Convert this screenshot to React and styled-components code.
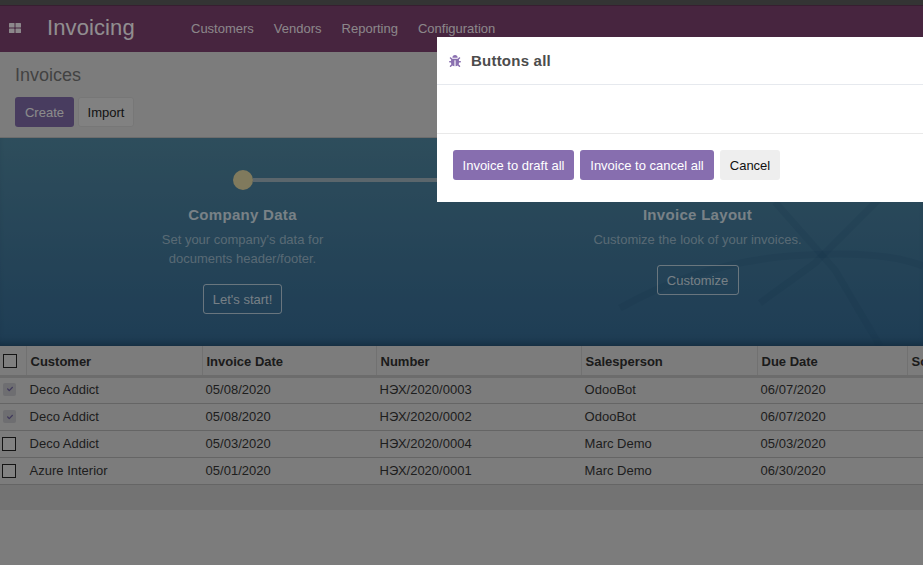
import styled, { createGlobalStyle } from "styled-components";
import { FaBug, FaCheck } from "react-icons/fa";

const invoices = [
  { customer: "Deco Addict", date: "05/08/2020", number: "НЭХ/2020/0003", person: "OdooBot", due: "06/07/2020", checked: true },
  { customer: "Deco Addict", date: "05/08/2020", number: "НЭХ/2020/0002", person: "OdooBot", due: "06/07/2020", checked: true },
  { customer: "Deco Addict", date: "05/03/2020", number: "НЭХ/2020/0004", person: "Marc Demo", due: "05/03/2020" },
  { customer: "Azure Interior", date: "05/01/2020", number: "НЭХ/2020/0001", person: "Marc Demo", due: "06/30/2020" },
];

export default function App() {
  return (
    <Page>
      <GlobalStyle />
      <TopStrip />
      <Navbar>
        <AppsIcon viewBox="0 0 12 10">
          <rect x="0" y="0" width="5.5" height="4.5" rx="0.6" />
          <rect x="6.5" y="0" width="5.5" height="4.5" rx="0.6" />
          <rect x="0" y="5.5" width="5.5" height="4.5" rx="0.6" />
          <rect x="6.5" y="5.5" width="5.5" height="4.5" rx="0.6" />
        </AppsIcon>
        <Brand>Invoicing</Brand>
        <NavMenu>
          <NavItem>Customers</NavItem>
          <NavItem>Vendors</NavItem>
          <NavItem>Reporting</NavItem>
          <NavItem>Configuration</NavItem>
        </NavMenu>
      </Navbar>

      <ControlPanel>
        <Title>Invoices</Title>
        <Actions>
          <CreateBtn>Create</CreateBtn>
          <ImportBtn>Import</ImportBtn>
        </Actions>
      </ControlPanel>

      <Banner>
        <BannerLines viewBox="0 0 923 208" preserveAspectRatio="none">
          <path d="M775 64 L835 132 L880 208" />
          <path d="M880 60 L815 125 L760 165" />
          <path d="M620 170 Q700 125 790 118 T923 128" />
        </BannerLines>
        <Step>
          <Dot $connected />
          <StepTitle>Company Data</StepTitle>
          <StepText>
            Set your company's data for
            <br />
            documents header/footer.
          </StepText>
          <StepBtn $width={79}>Let's start!</StepBtn>
        </Step>
        <Step>
          <Dot />
          <StepTitle>Invoice Layout</StepTitle>
          <StepText>Customize the look of your invoices.</StepText>
          <StepBtn $width={82}>Customize</StepBtn>
        </Step>
      </Banner>

      <Table>
        <colgroup>
          <col width="26" />
          <col width="176" />
          <col width="174" />
          <col width="205" />
          <col width="176" />
          <col width="150" />
          <col width="60" />
        </colgroup>
        <thead>
          <tr>
            <HeadCheck>
              <Box $head />
            </HeadCheck>
            <Head>Customer</Head>
            <Head>Invoice Date</Head>
            <Head>Number</Head>
            <Head>Salesperson</Head>
            <Head>Due Date</Head>
            <Head>Source</Head>
          </tr>
        </thead>
        <tbody>
          {invoices.map((inv) => (
            <Row key={inv.number}>
              <CheckCell>
                {inv.checked ? (
                  <TickBox>
                    <FaCheck />
                  </TickBox>
                ) : (
                  <Box />
                )}
              </CheckCell>
              <Cell>{inv.customer}</Cell>
              <Cell>{inv.date}</Cell>
              <Cell>{inv.number}</Cell>
              <Cell>{inv.person}</Cell>
              <Cell>{inv.due}</Cell>
              <Cell />
            </Row>
          ))}
        </tbody>
      </Table>
      <FooterBand />

      <Backdrop />
      <Modal>
        <ModalHeader>
          <BugIcon>
            <FaBug />
          </BugIcon>
          <ModalTitle>Buttons all</ModalTitle>
        </ModalHeader>
        <ModalBody />
        <ModalFooter>
          <PrimaryBtn $width={121}>Invoice to draft all</PrimaryBtn>
          <PrimaryBtn $width={134}>Invoice to cancel all</PrimaryBtn>
          <CancelBtn>Cancel</CancelBtn>
        </ModalFooter>
      </Modal>
    </Page>
  );
}

const GlobalStyle = createGlobalStyle`
  html, body {
    margin: 0;
    padding: 0;
    background: #cfcfcf;
  }
  body {
    font-family: "Liberation Sans", Arial, sans-serif;
    font-size: 13px;
  }
`;

const Page = styled.div`
  position: relative;
  width: 923px;
  height: 565px;
  overflow: hidden;
  background: #cfcfcf;
`;

const TopStrip = styled.div`
  height: 5px;
  background: #585858;
`;

const Navbar = styled.div`
  height: 47px;
  display: flex;
  align-items: center;
  background: #773f69;
  border-top: 1px solid #5e3253;
  box-sizing: border-box;
  padding-left: 9px;
`;

const AppsIcon = styled.svg`
  width: 12px;
  height: 10px;
  fill: #fff;
  opacity: 0.85;
  margin-right: 26px;
  margin-bottom: 2px;
`;

const Brand = styled.div`
  color: rgba(255, 255, 255, 0.92);
  font-size: 22px;
  letter-spacing: 0.1px;
  width: 144px;
  margin-bottom: 2px;
`;

const NavMenu = styled.div`
  display: flex;
  gap: 20px;
  margin-bottom: 2px;
`;

const NavItem = styled.div`
  color: rgba(255, 255, 255, 0.85);
  font-size: 13px;
`;

const ControlPanel = styled.div`
  height: 86px;
  box-sizing: border-box;
  padding: 13px 15px 0;
  background: #cfcfcf;
  border-bottom: 1px solid #b5b5b5;
`;

const Title = styled.div`
  font-size: 18px;
  line-height: 20px;
  color: #6f6f6f;
`;

const Actions = styled.div`
  display: flex;
  gap: 4px;
  margin-top: 12px;
`;

const CreateBtn = styled.button`
  width: 59px;
  height: 30px;
  padding: 0;
  border: none;
  border-radius: 3px;
  background: #78659f;
  color: #e8e8e8;
  font: 13px "Liberation Sans", Arial, sans-serif;
`;

const ImportBtn = styled.button`
  width: 56px;
  height: 30px;
  padding: 0;
  border: 1px solid #c6c6c6;
  border-radius: 3px;
  background: #d8d8d8;
  color: #222;
  font: 13px "Liberation Sans", Arial, sans-serif;
`;

const Banner = styled.div`
  position: relative;
  height: 208px;
  box-sizing: border-box;
  padding: 32px 0 0 15px;
  display: grid;
  grid-template-columns: 455px 455px;
  overflow: hidden;
  background: linear-gradient(#4d8199, #33668d);
  box-shadow: inset 0 -8px 8px -6px rgba(10, 30, 50, 0.45);
`;

const BannerLines = styled.svg`
  position: absolute;
  inset: 0;
  width: 923px;
  height: 208px;
  fill: none;
  stroke: rgba(30, 80, 110, 0.14);
  stroke-width: 7;
`;

const Step = styled.div`
  position: relative;
  display: flex;
  flex-direction: column;
  align-items: center;
  text-align: center;
  color: #fff;
`;

const Dot = styled.div`
  position: relative;
  width: 20px;
  height: 20px;
  border-radius: 50%;
  background: #d6cc9c;
  margin-bottom: 16px;

  ${(p) =>
    p.$connected &&
    `
    &::after {
      content: "";
      position: absolute;
      left: 20px;
      top: 8px;
      width: 440px;
      height: 4px;
      background: #98abb4;
    }
  `}
`;

const StepTitle = styled.div`
  font-size: 15px;
  font-weight: bold;
  line-height: 18px;
  color: rgba(255, 255, 255, 0.72);
  letter-spacing: 0.3px;
`;

const StepText = styled.div`
  font-size: 13px;
  line-height: 19px;
  margin-top: 6px;
  color: rgba(255, 255, 255, 0.45);
`;

const StepBtn = styled.button`
  width: ${(p) => p.$width}px;
  height: 30px;
  padding: 0;
  margin-top: 16px;
  border: 1px solid rgba(255, 255, 255, 0.6);
  border-radius: 3px;
  background: transparent;
  color: rgba(255, 255, 255, 0.72);
  font: 13px "Liberation Sans", Arial, sans-serif;
`;

const Table = styled.table`
  table-layout: fixed;
  width: 967px;
  border-collapse: collapse;
  background: #cfcfcf;
  font-size: 13px;
`;

const Head = styled.th`
  height: 30px;
  padding: 2px 0 0 4px;
  box-sizing: border-box;
  text-align: left;
  font-weight: bold;
  white-space: nowrap;
  overflow: hidden;
  color: #2e2e2e;
  border-left: 1px solid #bcbcbc;
  border-bottom: 3px solid #b4b4b4;
`;

const HeadCheck = styled.th`
  padding: 2px 0 0 3px;
  text-align: left;
  border-bottom: 3px solid #b4b4b4;
`;

const Row = styled.tr`
  &:first-child td {
    padding-bottom: 2px;
  }
`;

const CheckCell = styled.td`
  height: 27px;
  padding: 0 0 0 2px;
  box-sizing: border-box;
  border-bottom: 1px solid #a8a8a8;
`;

const Cell = styled.td`
  height: 27px;
  padding: 0 0 0 3.6px;
  box-sizing: border-box;
  color: #333;
  white-space: nowrap;
  border-bottom: 1px solid #a8a8a8;
`;

const Box = styled.div`
  width: 14px;
  height: 14px;
  box-sizing: border-box;
  border: 1px solid #222;
  background: ${(p) => (p.$head ? "#d4d4d4" : "#d9d9d9")};
`;

const TickBox = styled.div`
  width: 13px;
  height: 13px;
  margin-left: 1px;
  border-radius: 2px;
  background: #b7b7bc;
  display: flex;
  align-items: center;
  justify-content: center;
  color: #6a5f98;
  font-size: 6px;
`;

const FooterBand = styled.div`
  height: 25px;
  background: #c0c0c0;
`;

const Backdrop = styled.div`
  position: absolute;
  inset: 0;
  background: rgba(0, 0, 0, 0.4);
`;

const Modal = styled.div`
  position: absolute;
  left: 437px;
  top: 37px;
  width: 600px;
  height: 165px;
  background: #fff;
  display: flex;
  flex-direction: column;
`;

const ModalHeader = styled.div`
  height: 48px;
  box-sizing: border-box;
  display: flex;
  align-items: center;
  padding-left: 12px;
  border-bottom: 1px solid #e6e9ee;
`;

const BugIcon = styled.span`
  display: flex;
  color: #8a70b0;
  font-size: 12px;
  margin-right: 10px;
`;

const ModalTitle = styled.div`
  font-size: 15px;
  font-weight: bold;
  color: #4c4c4c;
  letter-spacing: 0.22px;
`;

const ModalBody = styled.div`
  height: 49px;
  box-sizing: border-box;
  border-bottom: 1px solid #e9e9e9;
`;

const ModalFooter = styled.div`
  display: flex;
  gap: 6px;
  padding: 16px 0 0 16px;
`;

const PrimaryBtn = styled.button`
  width: ${(p) => p.$width}px;
  height: 30px;
  padding: 0;
  border: none;
  border-radius: 3px;
  background: #876eaf;
  color: #fff;
  font: 13px "Liberation Sans", Arial, sans-serif;
`;

const CancelBtn = styled.button`
  height: 30px;
  width: 60px;
  padding: 0;
  border: none;
  border-radius: 3px;
  background: #eee;
  color: #111;
  font: 13px "Liberation Sans", Arial, sans-serif;
`;
